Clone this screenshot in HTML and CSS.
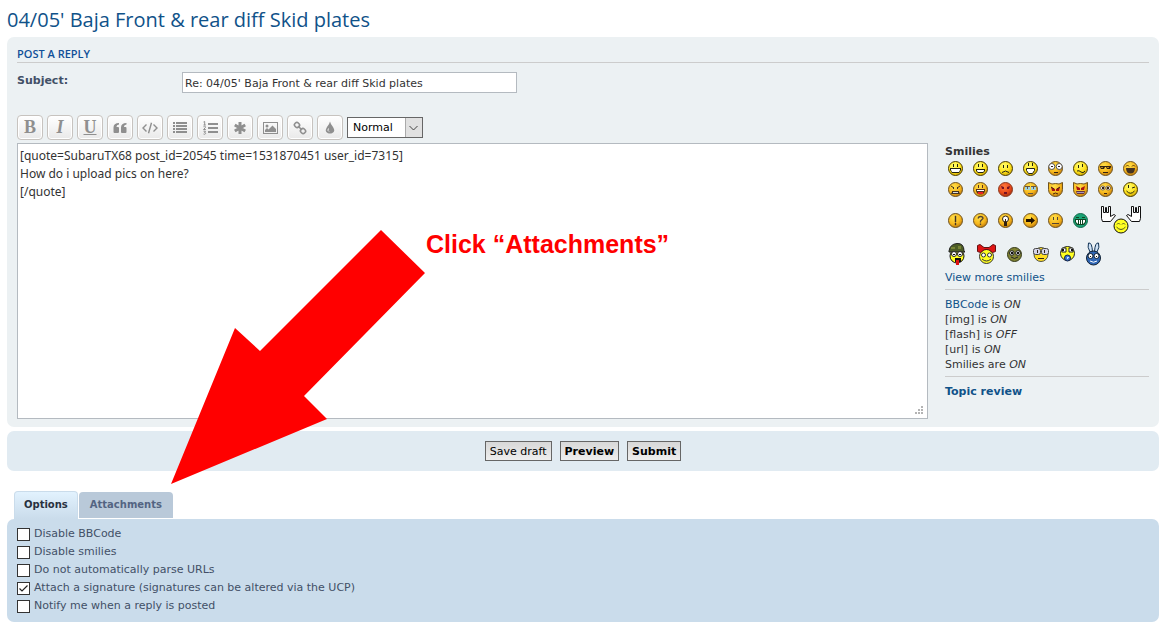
FILE: index.html
```html
<!DOCTYPE html>
<html lang="en">
<head>
    <meta charset="UTF-8">
    <meta name="viewport" content="width=device-width, initial-scale=1.0">
    <title>Post a reply</title>
    <link rel="stylesheet" href="styles.css">
</head>

<body>
    <!-- shared smiley faces -->
    <svg class="sprite" width="0" height="0">
        <defs>
            <radialGradient id="gold" cx="40%" cy="30%" r="75%">
                <stop offset="0" stop-color="#ffe04a" />
                <stop offset="0.6" stop-color="#f7b71c" />
                <stop offset="1" stop-color="#b9730a" />
            </radialGradient>
            <radialGradient id="bright" cx="40%" cy="30%" r="75%">
                <stop offset="0" stop-color="#ffff70" />
                <stop offset="0.6" stop-color="#ffe21c" />
                <stop offset="1" stop-color="#c9a000" />
            </radialGradient>
            <radialGradient id="red" cx="40%" cy="30%" r="75%">
                <stop offset="0" stop-color="#ff7a3c" />
                <stop offset="0.6" stop-color="#ea4a1a" />
                <stop offset="1" stop-color="#9c2c0c" />
            </radialGradient>
            <symbol id="face" viewBox="0 0 15 15"><circle cx="7.5" cy="7.5" r="7" fill="url(#bright)" stroke="#4a3c00" /></symbol>
            <symbol id="face-gold" viewBox="0 0 15 15"><circle cx="7.5" cy="7.5" r="7" fill="url(#gold)" stroke="#6f5320" /></symbol>
            <symbol id="face-red" viewBox="0 0 15 15"><circle cx="7.5" cy="7.5" r="7" fill="url(#red)" stroke="#8a3a20" /></symbol>
            <symbol id="face-devil" viewBox="0 0 15 15"><path d="M.5.5 4 2q3.500-1 7 0L14.500.5v7q0 3-2 5-2 2-5 2t-5-2q-2-2-2-5z" fill="url(#gold)" stroke="#6f5320" /></symbol>
        </defs>
    </svg>

    <div class="wrap">
        <h2 class="topic-title"><a href="#">04/05' Baja Front &amp; rear diff Skid plates</a></h2>

        <form id="postform" action="#">
            <!-- message editor -->
            <div class="panel">
                <h3>Post a reply</h3>
                <div class="subject-row">
                    <label for="subject">Subject:</label>
                    <input type="text" id="subject" class="inputbox" value="Re: 04/05' Baja Front &amp; rear diff Skid plates">
                </div>

                <div class="editor">
                    <div class="message">
                        <div class="format-buttons">
                            <button type="button" class="tool letter" title="Bold"><b>B</b></button>
                            <button type="button" class="tool letter" title="Italic"><i>I</i></button>
                            <button type="button" class="tool letter" title="Underline"><u>U</u></button>
                            <button type="button" class="tool" title="Quote">
                                <svg width="14" height="12" viewBox="0 0 14 12"><path d="M6 1v1.500Q3.500 2.700 3.400 5H5q1 0 1 1v4q0 1-1 1H1.500q-1 0-1-1V5.500Q.5 1.200 6 1zM13.500 1v1.500q-2.500.2-2.600 2.500h1.600q1 0 1 1v4q0 1-1 1H9q-1 0-1-1V5.500Q8 1.200 13.500 1z" /></svg>
                            </button>
                            <button type="button" class="tool" title="Code">
                                <svg class="line" width="16" height="12" viewBox="0 0 16 12"><path d="M4.500 2.500 1 6l3.500 3.500M11.500 2.500 15 6l-3.500 3.500M9.500.8l-3 10.400" /></svg>
                            </button>
                            <button type="button" class="tool" title="List">
                                <svg width="14" height="11" viewBox="0 0 14 11"><path d="M0 0h2v2H0zM3 0h11v2H3zM0 3h2v2H0zM3 3h11v2H3zM0 6h2v2H0zM3 6h11v2H3zM0 9h2v2H0zM3 9h11v2H3z" /></svg>
                            </button>
                            <button type="button" class="tool" title="Ordered list">
                                <svg width="15" height="14" viewBox="0 0 15 14"><path d="M5 2h10v2H5zM5 6h10v2H5zM5 10h10v2H5z" /><path class="thin" d="M.5 1 1.700.5V4M.5 4h2.300M.5 5.700q1-.8 2 0 .4.800-2 2.800h2.300M.5 10.200h2L1.500 11.500q1.300 0 1.200 1-.7 1.300-2.200.5" /></svg>
                            </button>
                            <button type="button" class="tool" title="List item">
                                <svg class="heavy" width="12" height="12" viewBox="0 0 12 12"><path d="M6 0v12M.8 3l10.400 6M.8 9l10.400-6" /></svg>
                            </button>
                            <button type="button" class="tool" title="Insert image">
                                <svg width="15" height="12" viewBox="0 0 15 12"><path fill-rule="evenodd" d="M0 0h15v12H0zM1 1v10h13V1z" /><circle cx="4" cy="4" r="1.500" /><path d="M2 10V8l2-2 1.500 1.500L9.500 3.500 13 7v3z" /></svg>
                            </button>
                            <button type="button" class="tool" title="Insert URL">
                                <svg class="chain" width="14" height="14" viewBox="0 0 14 14"><rect x="-2.500" y="-2.300" width="5" height="4.600" rx="2" transform="translate(4 4) rotate(45)" /><rect x="-2.500" y="-2.300" width="5" height="4.600" rx="2" transform="translate(10 10) rotate(45)" /><path d="M5 5l4 4" /></svg>
                            </button>
                            <button type="button" class="tool" title="Font colour">
                                <svg width="10" height="13" viewBox="0 0 10 13"><path d="M5 .5Q5.500 3 8 6q3 5-1 6.200-2 .6-4 0Q-1 11 2 6 4.500 3 5 .5z" /><path d="M3.500 7.500q-1.500 2 .5 3" fill="none" stroke="#f4f4f4" /></svg>
                            </button>
                            <select class="font-size" title="Font size">
                                <option>Tiny</option>
                                <option>Small</option>
                                <option selected>Normal</option>
                                <option>Large</option>
                                <option>Huge</option>
                            </select>
                        </div>
                        <textarea id="message" aria-label="Message" spellcheck="false">[quote=SubaruTX68 post_id=20545 time=1531870451 user_id=7315]
How do i upload pics on here?
[/quote]</textarea>
                    </div>

                    <div class="smiley-box">
                        <strong>Smilies</strong>
                        <div class="smilies">
                            <svg width="15" height="15"><use href="#face" /><path d="M5 3h1v3H5zM9 3h1v3H9zM2 7h11v2l-2 3H4L2 9z" fill="#221" /><path d="M3 8h9v1l-1 2H4L3 9z" fill="#fff" /></svg>
                            <svg width="15" height="15"><use href="#face" /><path d="M5 3h1v3H5zM9 3h1v3H9zM3 8h9v2l-2 2H5L3 10z" fill="#221" /><path d="M4 9h7v1l-1 1H5l-1-1z" fill="#fff" /></svg>
                            <svg width="15" height="15"><use href="#face" /><path d="M5 4h1v3H5zM9 4h1v3H9z" fill="#221" /><path d="M4 11.500q3.500-3 7 0" fill="none" stroke="#221" /></svg>
                            <svg width="15" height="15"><use href="#face" /><path d="M5 2h1v3H5zM9 2h1v3H9z" fill="#221" /><path d="M3.500 7.500h8v2l-2 3h-4l-2-3z" fill="#fff" stroke="#221" /></svg>
                            <svg width="15" height="15"><use href="#face-gold" /><circle cx="3.800" cy="5.500" r="3" fill="#fff" stroke="#555" /><circle cx="11.200" cy="5.500" r="3" fill="#fff" stroke="#555" /><path d="M3 5h2v1H3zM10 5h2v1h-2zM6 11h4v1H6z" fill="#321" /></svg>
                            <svg width="15" height="15"><use href="#face" /><path d="M5 4h1v3H5zM9 3h1v3H9z" fill="#221" /><path d="M4 10q2-1 4 1t4-1" fill="none" stroke="#221" /></svg>
                            <svg width="15" height="15"><use href="#face-gold" /><path d="M2 5h11v1l-1 2H9L8 6H7L6 8H3L2 6zM5 11h5v1H5z" fill="#321" /><path d="M3 6h2v1H3zM9 6h2v1H9z" fill="#b88420" /></svg>
                            <svg width="15" height="15"><use href="#face-gold" /><path d="M3 5.500 4.500 4 6 5.500M9 5.500 10.500 4 12 5.500" fill="none" stroke="#5a3a08" /><path d="M3 7h9q0 5.500-4.500 5.500T3 7z" fill="#432" /></svg>

                            <svg width="15" height="15"><use href="#face-gold" /><path d="M3 4l3 2M12 4l-3 2" stroke="#432" /><path d="M5 5h1v2H5zM9 5h1v2H9zM4 9h7v1l1 2H3l1-2z" fill="#432" /><path d="M5 10h5v1H5z" fill="#ddd" /></svg>
                            <svg width="15" height="15"><use href="#face-gold" /><path d="M5 3h1v3H5zM9 3h1v3H9zM3 7h9v2q-1 3.500-4.500 3.500T3 9z" fill="#532" /><path d="M4 8h7v1H4z" fill="#fff" /><path d="M5 10h5v2H5z" fill="#e22" /></svg>
                            <svg width="15" height="15"><use href="#face-red" /><path d="M3 4l3 1v2H4zM12 4 9 5v2h2zM6 10h3v2H6z" fill="#712" /></svg>
                            <svg width="15" height="15"><use href="#face-gold" /><path d="M2 5h5v3H2zM8 5h5v3H8z" fill="#9ed4df" /><path d="M2 4.500h5M8 4.500h5M4.500 5v2M10.500 5v2M5 11.500h5" stroke="#654" /></svg>
                            <svg width="15" height="15"><use href="#face-devil" /><path d="M3 5l4 2v2H4zM12 5 8 7v2h3z" fill="#a11" /><path d="M3 5l3 2M12 5 9 7M5 12q2.500-2 5 0" fill="none" stroke="#421" /></svg>
                            <svg width="15" height="15"><use href="#face-devil" /><path d="M3 4l4 2v2H4zM12 4 8 6v2h3z" fill="#a11" /><path d="M3 9h9l-1 3H4z" fill="#634" /><path d="M4 10h7v1H4z" fill="#a9b" /></svg>
                            <svg width="15" height="15"><use href="#face-gold" /><ellipse cx="4.800" cy="6" rx="2.300" ry="2" fill="#fff" stroke="#765" /><ellipse cx="10.200" cy="6" rx="2.300" ry="2" fill="#fff" stroke="#765" /><path d="M4 5h2v2H4zM9 5h2v2H9zM6 11h3v1H6z" fill="#321" /></svg>
                            <svg width="15" height="15"><use href="#face" /><path d="M5 3h1v3H5z" fill="#221" /><path d="M9 6l3-1M3.500 9q4 4.500 8 0" fill="none" stroke="#221" /></svg>
                        </div>

                        <div class="smilies icons">
                            <svg width="15" height="15"><use href="#face-gold" /><path d="M7 3h1v6H7zM7 10h1v2H7z" fill="#321" stroke="#543" stroke-width=".5" /></svg>
                            <svg width="15" height="15"><use href="#face-gold" /><path d="M5 5.500Q5.500 3.500 7.500 3.500q2.500 0 2.500 2L7.500 8v1.500M7.500 10.500V12" fill="none" stroke="#543" stroke-width="1.300" /></svg>
                            <svg width="15" height="15"><use href="#face-gold" /><circle cx="7.500" cy="6" r="3" fill="#fff" stroke="#321" /><path d="M6 9h3v4H6zM7 6h1v3H7z" fill="#321" /></svg>
                            <svg width="15" height="15"><use href="#face-gold" /><path d="M3 6h5V4l4 3.500L8 11V9H3z" fill="#210" /></svg>
                            <svg width="15" height="15"><use href="#face-gold" /><path d="M5 4h1v3H5zM9 4h1v3H9zM4 10h7v1H4z" fill="#543" /></svg>
                            <svg width="15" height="15"><circle cx="7.500" cy="7.500" r="7" fill="#19a374" stroke="#156b4d" /><path d="M3 4h3v1H3zM9 4h3v1H9zM2 6h11v3l-2 3H4L2 9z" fill="#142" /><path d="M3 7h2v4L3 9zM6 7h1v4H6zM8 7h1v4H8zM10 7h2v2l-2 2z" fill="#fff" /></svg>
                            <svg class="rock" width="40" height="28"><g fill="#fff" stroke="#111"><path d="M.5.5h2v6h2v-5h1v5h2v-6h2v10l3.500-2 1.500 1-5 6h-8l-1-3z" /><path d="M39.500.5h-2v6h-2v-5h-1v5h-2v-6h-2v10l-3.500-2-1.500 1 5 6h8l1-3z" /></g><circle cx="20" cy="20" r="7" fill="#ff2" stroke="#111" /><path d="M16 18.500l1.500-1.500 1.500 1.500M21 18.500l1.500-1.500 1.500 1.500M15.500 21q4.500 5 9 0" fill="none" stroke="#552" /></svg>
                        </div>

                        <div class="smilies characters">
                            <svg width="18" height="22"><circle cx="9" cy="13" r="7" fill="#ff2" stroke="#111" /><path d="M1 8Q2 1 9 .5t7 7.500l1 1H1z" fill="#4d5d25" stroke="#222" /><path d="M3 4h4v2H3zM10 3h3v3h-3z" fill="#788436" /><circle cx="6" cy="11" r="2.500" fill="#fff" stroke="#222" /><circle cx="12" cy="11" r="2.500" fill="#fff" stroke="#222" /><path d="M5 11h2v1H5zM11 11h2v1h-2zM7 15h6v4H7z" fill="#111" /><path d="M8 17h3v5H8z" fill="#d11" /></svg>
                            <svg width="19" height="20"><circle cx="9.500" cy="12.500" r="7" fill="#ff2" stroke="#333" /><path d="M.5 1.500 3 .5l4 3h5l4-3 2.500 1v6l-3 1-4-3h-4l-4 3-3-1z" fill="#e01515" stroke="#611" /><circle cx="6.500" cy="11" r="2" fill="#fff" stroke="#333" /><circle cx="12.500" cy="11" r="2" fill="#fff" stroke="#333" /><path d="M5 15q4.500 4 9 0" fill="none" stroke="#333" /></svg>
                            <svg width="15" height="15"><circle cx="7.500" cy="7.500" r="7" fill="#818332" stroke="#333818" /><circle cx="4.800" cy="6" r="2.300" fill="#ddd" stroke="#222" /><circle cx="11" cy="6" r="2.300" fill="#fff" stroke="#222" /><path d="M4 5h2v2H4zM10 5h2v2h-2z" fill="#111" /><path d="M4 10q3.500 3 7 0" fill="none" stroke="#222" /></svg>
                            <svg width="16" height="15"><circle cx="8" cy="7.500" r="7" fill="#fd2" stroke="#554" /><rect x=".5" y="1.500" width="7" height="6" rx="2" fill="#d4d4e8" stroke="#444" /><rect x="8.500" y="1.500" width="7" height="6" rx="2" fill="#d4d4e8" stroke="#444" /><path d="M4 3h1v3H4zM11 3h1v3h-1zM5 11h6v1H5z" fill="#321" /></svg>
                            <svg width="15" height="16"><circle cx="7.500" cy="7.500" r="7" fill="#ff2" stroke="#222" /><path d="M2 2h4v4H2zM9 2h4v4H9z" fill="#fff" stroke="#222" /><path d="M2 3h2v2H2zM11 3h2v2h-2z" fill="#111" /><circle cx="7.500" cy="12" r="3" fill="#3c78d8" stroke="#124" /><path d="M7 11h2v1H8v1H7z" fill="#cdf" /></svg>
                            <svg width="15" height="24"><path d="M4 10Q1 5 2.500 1 6 0 6.500 10zM11 10q3-5 1.500-9Q9 0 8.500 10z" fill="#cfe2f5" stroke="#135" /><circle cx="7.500" cy="16" r="7" fill="#2f66b5" stroke="#123" /><circle cx="4.500" cy="14" r="2.500" fill="#fff" stroke="#123" /><circle cx="10.500" cy="14" r="2.500" fill="#fff" stroke="#123" /><path d="M4 14h1v1H4zM10 14h1v1h-1z" fill="#111" /><path d="M4 19q3.500 2.500 7 0" fill="none" stroke="#fff" /></svg>
                        </div>
                        <a href="#">View more smilies</a>

                        <div class="bbcode-status">
                            <a href="#">BBCode</a> is <em>ON</em><br>
                            [img] is <em>ON</em><br>
                            [flash] is <em>OFF</em><br>
                            [url] is <em>ON</em><br>
                            Smilies are <em>ON</em>
                        </div>
                        <div class="review">
                            <strong><a href="#">Topic review</a></strong>
                        </div>
                    </div>
                </div>
            </div>

            <!-- submit buttons -->
            <div class="submit-buttons">
                <button type="button" class="btn">Save draft</button>
                <button type="button" class="btn main">Preview</button>
                <button type="submit" class="btn main">Submit</button>
            </div>

            <!-- tabs -->
            <div class="tabs">
                <a class="tab active" href="#options-panel">Options</a>
                <a class="tab" href="#attach-panel">Attachments</a>
            </div>
            <div id="options-panel" class="options">
                <label><input type="checkbox">Disable BBCode</label>
                <label><input type="checkbox">Disable smilies</label>
                <label><input type="checkbox">Do not automatically parse URLs</label>
                <label><input type="checkbox" checked>Attach a signature (signatures can be altered via the UCP)</label>
                <label><input type="checkbox">Notify me when a reply is posted</label>
            </div>
        </form>

        <!-- hint pointing at the attachments tab -->
        <svg class="hint-arrow" width="254" height="255" viewBox="0 0 254 255"><path d="M0 254 64 98l25 23L210 0l44 43-121 123 23 23z" /></svg>
        <p class="hint-text">Click “Attachments”</p>
    </div>
</body>

</html>
```
FILE: styles.css
```css
* {
    padding: 0;
    margin: 0;
    box-sizing: border-box;
}

body {
    background-color: #fff;
    color: #333;
    font-family: Verdana, "DejaVu Sans", sans-serif;
    font-size: 11px;
    line-height: 15px;
}

a {
    color: #105289;
    text-decoration: none;
}

svg {
    display: block;
}

.sprite {
    position: absolute;
}

.wrap {
    position: relative;
    padding: 7px 15px 11px 7px;
}

.topic-title {
    font-family: "Trebuchet MS", "Open Sans", sans-serif;
    font-size: 20px;
    font-weight: 500;
    line-height: 26px;
    margin-bottom: 4px;
}

/* editor panel */
.panel {
    background-color: #ecf1f3;
    border-radius: 7px;
    padding: 8px 10px;
}

.panel h3 {
    font-family: "Open Sans", sans-serif;
    font-size: 11px;
    font-weight: 600;
    line-height: 17px;
    text-transform: uppercase;
    color: #115098;
    border-bottom: 1px solid #ccc;
    margin-bottom: 9px;
}

.subject-row {
    display: flex;
}

.subject-row label {
    width: 165px;
    font-weight: bold;
    line-height: 17px;
    color: #425067;
}

.inputbox {
    width: 335px;
    height: 21px;
    padding: 1px 2px 0;
    border: 1px solid #b4bac0;
    background-color: #fff;
    color: #333;
    font-family: inherit;
    font-size: 11px;
}

.editor {
    display: flex;
    gap: 17px;
    padding-top: 22px;
}

.message {
    flex: 1;
}

.format-buttons {
    display: flex;
    align-items: center;
    gap: 4px;
    margin-bottom: 3px;
}

.tool {
    width: 26px;
    height: 25px;
    display: flex;
    align-items: center;
    justify-content: center;
    border: 1px solid #c7c3bf;
    border-radius: 4px;
    background: linear-gradient(#fff, #e9e9e9);
    box-shadow: inset 0 0 0 1px #fff;
    color: #8f8f8f;
}

.tool svg {
    fill: #8f8f8f;
}

.tool .thin,
.tool .line,
.tool .heavy,
.tool .chain {
    fill: none;
    stroke: #8f8f8f;
}

.tool .line {
    stroke-width: 1.4;
}

.tool .heavy {
    stroke-width: 3;
}

.tool .chain {
    stroke-width: 1.6;
}

.letter {
    font-family: "Liberation Serif", serif;
    font-size: 18px;
    font-weight: bold;
}

.font-size {
    width: 76px;
    height: 21px;
    padding-left: 5px;
    border: 1px solid #666;
    appearance: none;
    background: url('data:image/svg+xml,<svg xmlns="http://www.w3.org/2000/svg" width="17" height="19"><path d="M0 0h17v19H0z" fill="%23e1e1e1"/><path d="M.5 0v19" stroke="%23aaa"/><path d="M4.500 8l4 4 4-4" fill="none" stroke="%23444"/></svg>') right center no-repeat #fff;
    color: #000;
    font-family: inherit;
    font-size: 11px;
}

#message {
    display: block;
    width: 100%;
    height: 276px;
    padding: 3px 2px;
    border: 1px solid #b4bac0;
    background-color: #fff;
    color: #333;
    font-family: "Noto Sans", sans-serif;
    font-size: 12px;
    line-height: 18px;
    resize: vertical;
}

#message::-webkit-resizer {
    background: url('data:image/svg+xml,<svg xmlns="http://www.w3.org/2000/svg" width="12" height="12"><path d="M6 0h2v2H6zM3 3h2v2H3zM6 3h2v2H6zM0 6h2v2H0zM3 6h2v2H3zM6 6h2v2H6z" fill="%23b4b4b4"/></svg>') right bottom no-repeat;
}

/* smilies */
.smiley-box {
    width: 204px;
    padding-top: 29px;
}

.smilies {
    display: flex;
    flex-wrap: wrap;
    gap: 6px 10px;
    padding: 2px 3px 0;
}

.icons {
    align-items: center;
    padding-top: 9px;
}

.rock {
    margin-left: 3px;
}

.characters {
    align-items: center;
    gap: 11px;
    padding-top: 8px;
    padding-bottom: 4px;
}

.bbcode-status,
.review {
    border-top: 1px solid #ccc;
    margin-top: 4px;
    padding-top: 7px;
}

/* buttons */
.submit-buttons {
    display: flex;
    justify-content: center;
    gap: 8px;
    margin-top: 4px;
    padding: 10px 5px;
    border-radius: 7px;
    background-color: #e1ebf2;
}

.btn {
    height: 20px;
    padding: 0 4px;
    border: 1px solid #666;
    background: linear-gradient(#d8d8d8, #eee);
    color: #000;
    font-family: inherit;
    font-size: 11px;
}

.main {
    font-weight: bold;
}

/* options */
.tabs {
    display: flex;
    align-items: flex-end;
    gap: 1px;
    margin: 20px 7px 0;
}

.tab {
    padding: 5px 11px;
    margin-bottom: 1px;
    border-radius: 4px 4px 0 0;
    background-color: #b9c9d9;
    color: #536482;
    font-size: 10px;
    font-weight: bold;
    line-height: 16px;
}

.active {
    padding: 5px 9px 7px;
    margin-bottom: 0;
    border: 1px solid #cadceb;
    border-bottom: 0;
    background: linear-gradient(#e2f2fe, #cadceb);
    color: #28313f;
    line-height: 15px;
}

.options {
    padding: 6px 10px 7px;
    border-radius: 7px;
    background-color: #cadceb;
}

.options label {
    display: flex;
    align-items: center;
    gap: 4px;
    color: #425067;
    line-height: 18px;
}

.options input {
    width: 13px;
    height: 13px;
    border: 1px solid #333;
    background-color: #fff;
    appearance: none;
}

.options input:checked {
    background-image: url('data:image/svg+xml,<svg xmlns="http://www.w3.org/2000/svg" width="11" height="11"><path d="M1.500 5.500 4 8l5.500-5.500" fill="none" stroke="%23222" stroke-width="1.200"/></svg>');
}

/* hint */
.hint-arrow {
    position: absolute;
    left: 171px;
    top: 230px;
    fill: #f00;
    pointer-events: none;
}

.hint-text {
    position: absolute;
    left: 426px;
    top: 224px;
    color: #f00;
    font-family: "Arial Narrow", "Liberation Sans Narrow", "Liberation Sans", sans-serif;
    font-size: 25px;
    font-weight: bold;
    line-height: 40px;
    pointer-events: none;
}
```
